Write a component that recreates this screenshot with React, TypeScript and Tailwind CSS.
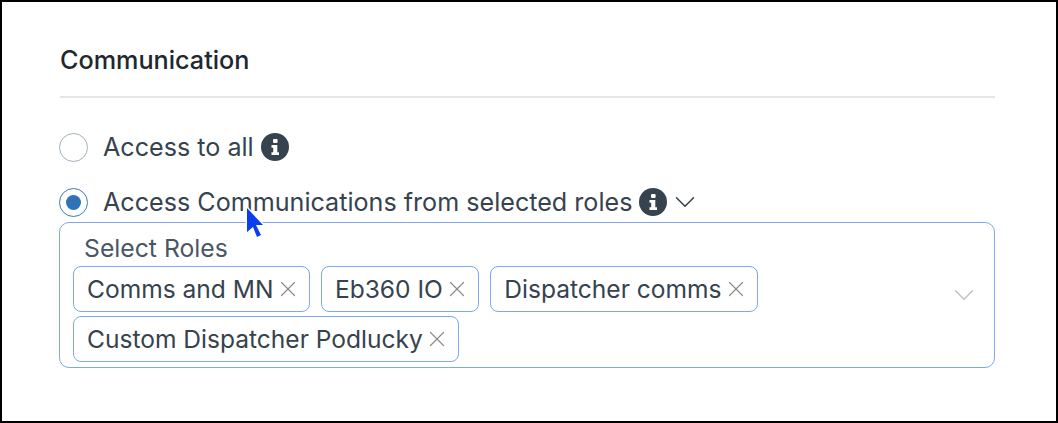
import React from 'react';
import { ChevronDown, X } from 'lucide-react';

const row1 = ['Comms and MN', 'Eb360 IO', 'Dispatcher comms'];

function InfoDot() {
  return (
    <svg viewBox="0 0 28 28" className="h-[28px] w-[28px] shrink-0">
      <circle cx="14" cy="14" r="14" fill="#36434e" />
      <rect x="12" y="6" width="4.6" height="4" rx="1" fill="#fff" />
      <path d="M10.5 12h5.8v7.2h1.7V22h-7.5v-2.8h1.7v-4.4h-1.7z" fill="#fff" />
    </svg>
  );
}

function Tag({ label }: { label: string }) {
  return (
    <div className="flex h-[46px] items-center rounded-[8px] border border-[#7ea6f4] pl-[13px] pr-[8px] text-[24.55px]">
      <span>{label}</span>
      <X className="ml-[1.5px] h-[26px] w-[26px] text-[#8c8c8c]" strokeWidth={1.1} />
    </div>
  );
}

export default function App() {
  return (
    <div className="h-[423px] w-[1058px] border-2 border-black bg-white pl-[57px] pr-[61px] pt-[40px] font-['Inter',sans-serif] text-[25.14px] text-[#36434e]">
      <h2 className="ml-[1px] border-b-2 border-[#e3e5e7] pb-[18px] text-[25.2px] font-[450] leading-[36px] text-[#20272e]">
        Communication
      </h2>

      <div className="mt-[34px] flex h-[30px] items-center">
        <span className="h-[29px] w-[29px] rounded-full border border-[#9fb0bd]" />
        <span className="ml-[15px] leading-[30px]">Access to all</span>
        <span className="ml-[7px]"><InfoDot /></span>
      </div>

      <div className="mt-[25px] flex h-[30px] items-center">
        <span className="flex h-[29px] w-[29px] items-center justify-center rounded-full border border-[#3b78bd]">
          <span className="h-[15px] w-[15px] rounded-full bg-[#2f72b8]" />
        </span>
        <span className="ml-[15px] leading-[30px]">Access Communications from selected roles</span>
        <span className="ml-[7px]"><InfoDot /></span>
        <ChevronDown className="ml-[1px] h-[34px] w-[34px] text-[#36434e]" strokeWidth={1.1} />
      </div>

      <div className="relative mt-[5px] h-[146px] rounded-[10px] border border-[#7ea6f4] pl-[13px]">
        <div className="ml-[11px] pt-[11px] text-[24.75px] leading-[28px] text-[#4a5763]">Select Roles</div>
        <div className="mt-[4px] flex flex-col gap-[4px]">
          <div className="flex gap-[11px]">
            {row1.map((r) => (
              <Tag key={r} label={r} />
            ))}
          </div>
          <div className="flex">
            <Tag label="Custom Dispatcher Podlucky" />
          </div>
        </div>
        <ChevronDown className="absolute right-[13px] top-[55px] h-[34px] w-[34px] text-[#c4c4c4]" strokeWidth={1.1} />
      </div>

      {/* mouse pointer from the recording */}
      <svg viewBox="0 0 24 36" className="absolute left-[244px] top-[205px] h-[36px] w-[24px]">
        <path d="M3 3v24l6-5 4 10 4-2-5-10h7z" fill="#0b3df0" stroke="#fff" strokeWidth="2.6" strokeLinejoin="round" paintOrder="stroke" />
      </svg>
    </div>
  );
}
